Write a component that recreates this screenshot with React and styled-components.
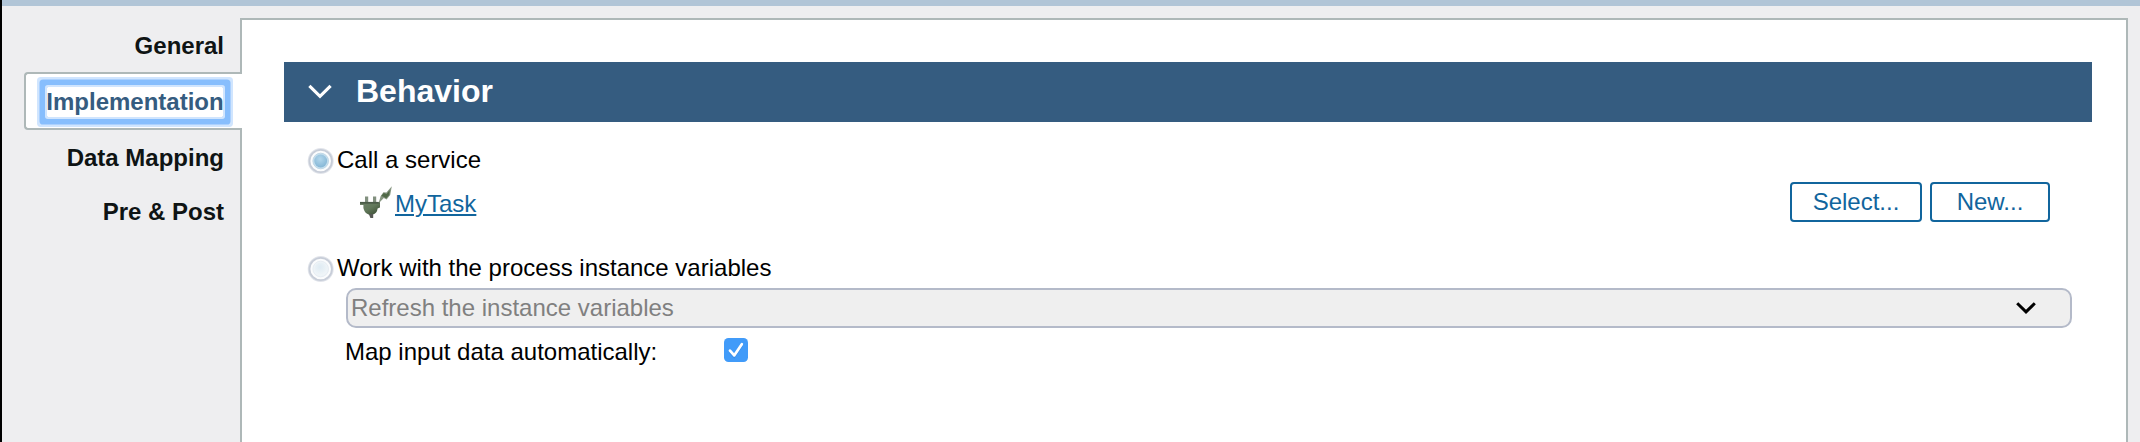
import React from "react";
import styled, { createGlobalStyle } from "styled-components";

const GlobalStyle = createGlobalStyle`
  * { box-sizing: border-box; }
  html, body { margin: 0; height: 100%; overflow: hidden; }
  body {
    font-family: "Liberation Sans", Arial, Helvetica, sans-serif;
    font-size: 24px;
    line-height: 28px;
    color: #000;
    background: #eeeef0;
  }
`;

const Page = styled.div`
  height: 442px;
  border-left: 2px solid #000;
  background: #eeeef0;
  display: flex;
  flex-direction: column;
`;

const TopStrip = styled.div`
  flex: none;
  height: 6px;
  background: #b1c5d7;
`;

const Body = styled.div`
  flex: 1;
  min-height: 0;
  display: flex;
  padding: 12px 12px 0 22px;
`;

const TabList = styled.nav`
  flex: none;
  width: 218px;
  margin-right: -2px;
  padding-top: 14px;
  z-index: 1;
  display: flex;
  flex-direction: column;
`;

const Tab = styled.div`
  height: ${(p) => p.$height}px;
  display: flex;
  justify-content: flex-end;
  align-items: flex-start;
  padding: ${(p) => (p.$active ? "13px 17px 0 0" : `${p.$top}px 18px 0 0`)};
  font-weight: bold;
  white-space: nowrap;
  color: ${(p) => (p.$active ? "#355c80" : "#0f1414")};
  ${(p) =>
    p.$active &&
    `
    background: #fff;
    border: 2px solid #aeb8b8;
    border-right: 0;
    padding-right: 19px;
    border-radius: 4px 0 0 4px;
  `}
`;

const FocusLabel = styled.span`
  display: flex;
  justify-content: center;
  width: 176px;
  height: 30px;
  padding-top: 1px;
  border-radius: 1px;
  box-shadow: 0 0 0 2px #d0e5fe, 0 0 0 7.5px #87befd, 0 0 0 10px #d0e5fe;
`;

const Panel = styled.main`
  flex: 1;
  min-width: 0;
  background: #fff;
  border: 2px solid #aeb8b8;
  border-bottom: 0;
  padding: 42px 34px 0 42px;
`;

const SectionHeader = styled.header`
  height: 60px;
  display: flex;
  align-items: center;
  gap: 24px;
  padding-left: 24px;
  background: #355c80;
  color: #fff;
`;

const SectionTitle = styled.h2`
  margin: -2px 0 0;
  font-size: 32px;
  line-height: 36px;
  font-weight: bold;
`;

const Form = styled.div`
  padding: 24px 20px 0 23px;
`;

const OptionRow = styled.div`
  height: 30px;
  display: flex;
  gap: 3px;
`;

const ServiceRow = styled.div`
  height: 40px;
  margin: 6px 0 32px;
  padding: 0 22px 0 53px;
  display: flex;
  align-items: flex-start;
`;

const IconSlot = styled.span`
  display: flex;
  width: 32px;
  height: 32px;
  margin-top: 4px;
`;

const ServiceLink = styled.a`
  margin: 8px auto 0 3px;
  color: #11659d;
  text-decoration: underline;
  text-decoration-thickness: 2px;
  text-underline-offset: 2px;
`;

const ActionButton = styled.button`
  width: ${(p) => p.$width}px;
  height: 40px;
  margin-left: 8px;
  padding: 0;
  font: inherit;
  color: #11659d;
  background: #fff;
  border: 2px solid #11659d;
  border-radius: 4px;
`;

const SelectBox = styled.div`
  height: 40px;
  margin: 4px 0 0 39px;
  padding: 0 34px 0 3px;
  display: flex;
  align-items: center;
  justify-content: space-between;
  color: #808080;
  background: #efefef;
  border: 2px solid #b4bac9;
  border-radius: 10px;
`;

const CheckRow = styled.label`
  display: flex;
  align-items: flex-start;
  margin: 10px 0 0 38px;
`;

const CheckText = styled.span`
  width: 379px;
`;

const RadioIcon = ({ checked }) => {
  const id = checked ? "dot-on" : "dot-off";
  return (
    <svg width="27" height="28" viewBox="0 0 27 28">
      <defs>
        <radialGradient id={id} cx="45%" cy="35%" r="65%">
          <stop offset="0" stopColor={checked ? "#b3d7ec" : "#dfebf3"} />
          <stop offset="1" stopColor={checked ? "#86b7d6" : "#f0f5f8"} />
        </radialGradient>
      </defs>
      <circle cx="13.7" cy="15" r="12.2" fill="#fbfcfd" stroke="#e2e5eb" strokeWidth="1.6" />
      <circle cx="13.7" cy="15" r="11.2" fill="none" stroke="#c7cdd8" strokeWidth="1.8" />
      <circle cx="13.7" cy="15" r="7.8" fill={checked ? "#c4deee" : "#eef4f8"} stroke={checked ? "#c0d8e7" : "#e7edf3"} strokeWidth="1" />
      <circle cx="13.7" cy="15" r="6.4" fill={`url(#${id})`} />
    </svg>
  );
};

const HeaderChevron = () => (
  <svg width="24" height="18" viewBox="0 0 24 18">
    <path d="M1.4 2.9 L12 13.3 L22.6 2.9" fill="none" stroke="#fff" strokeWidth="3.2" />
  </svg>
);

const SelectChevron = () => (
  <svg width="20" height="14" viewBox="0 0 20 14">
    <path d="M1.2 2.3 L10 10.9 L18.8 2.3" fill="none" stroke="#000" strokeWidth="3" />
  </svg>
);

const PlugIcon = () => (
  <svg width="32" height="32" viewBox="0 0 32 32">
    <defs>
      <linearGradient id="plug" x1="0" y1="0" x2="1" y2="1">
        <stop offset="0" stopColor="#6f8169" />
        <stop offset="0.5" stopColor="#61785a" />
        <stop offset="1" stopColor="#36472f" />
      </linearGradient>
    </defs>
    <path d="M5 10.5 H8.2 V17 H5 Z M13 10.5 H16.2 V17 H13 Z" fill="#82907f" />
    <path d="M0 16 H20 V21.5 L17.6 22.5 Q17 27.5 12.8 28.5 H8.6 Q4.4 27 3.4 22 V19 H0 Z" fill="url(#plug)" />
    <path d="M0 16.8 H19.5" stroke="#4b5b48" strokeWidth="1.8" />
    <path d="M8.8 28 H13.2 V32 H10.4 Z" fill="#565854" />
    <path d="M18.5 17.5 L20.6 10.2 L23.4 6.2 L26.4 6.6 L31.8 0.2 L30.2 9 L26.6 13.4 L23.8 12 Z" fill="#879681" />
    <path d="M21.2 10 L23.8 7 L26.6 8 L29.8 4 L29.2 9 L26.2 12.2 L23.6 10.8 Z" fill="#506947" />
  </svg>
);

const CheckboxIcon = () => (
  <svg width="24" height="24" viewBox="0 0 24 24">
    <rect width="24" height="24" rx="4.5" fill="#419bf9" />
    <path d="M6 13.8 L10.2 18.6 L17.8 7.3" fill="none" stroke="#2f7fd8" strokeWidth="2.6" opacity=".5" />
    <path d="M6 12.6 L10.2 17.4 L17.8 6.2" fill="none" stroke="#fff" strokeWidth="2.7" strokeLinecap="round" strokeLinejoin="round" />
  </svg>
);

export default function App() {
  return (
    <>
      <GlobalStyle />
      <Page>
        <TopStrip />
        <Body>
          <TabList>
            <Tab $height={40} $top={0}>General</Tab>
            <Tab $height={58} $active>
              <FocusLabel>Implementation</FocusLabel>
            </Tab>
            <Tab $height={54} $top={14}>Data Mapping</Tab>
            <Tab $height={54} $top={14}>Pre &amp; Post</Tab>
          </TabList>
          <Panel>
            <SectionHeader>
              <HeaderChevron />
              <SectionTitle>Behavior</SectionTitle>
            </SectionHeader>
            <Form>
              <OptionRow>
                <RadioIcon checked />
                <span>Call a service</span>
              </OptionRow>
              <ServiceRow>
                <IconSlot>
                  <PlugIcon />
                </IconSlot>
                <ServiceLink>MyTask</ServiceLink>
                <ActionButton $width={132}>Select...</ActionButton>
                <ActionButton $width={120}>New...</ActionButton>
              </ServiceRow>
              <OptionRow>
                <RadioIcon />
                <span>Work with the process instance variables</span>
              </OptionRow>
              <SelectBox>
                <span>Refresh the instance variables</span>
                <SelectChevron />
              </SelectBox>
              <CheckRow>
                <CheckText>Map input data automatically:</CheckText>
                <CheckboxIcon />
              </CheckRow>
            </Form>
          </Panel>
        </Body>
      </Page>
    </>
  );
}
